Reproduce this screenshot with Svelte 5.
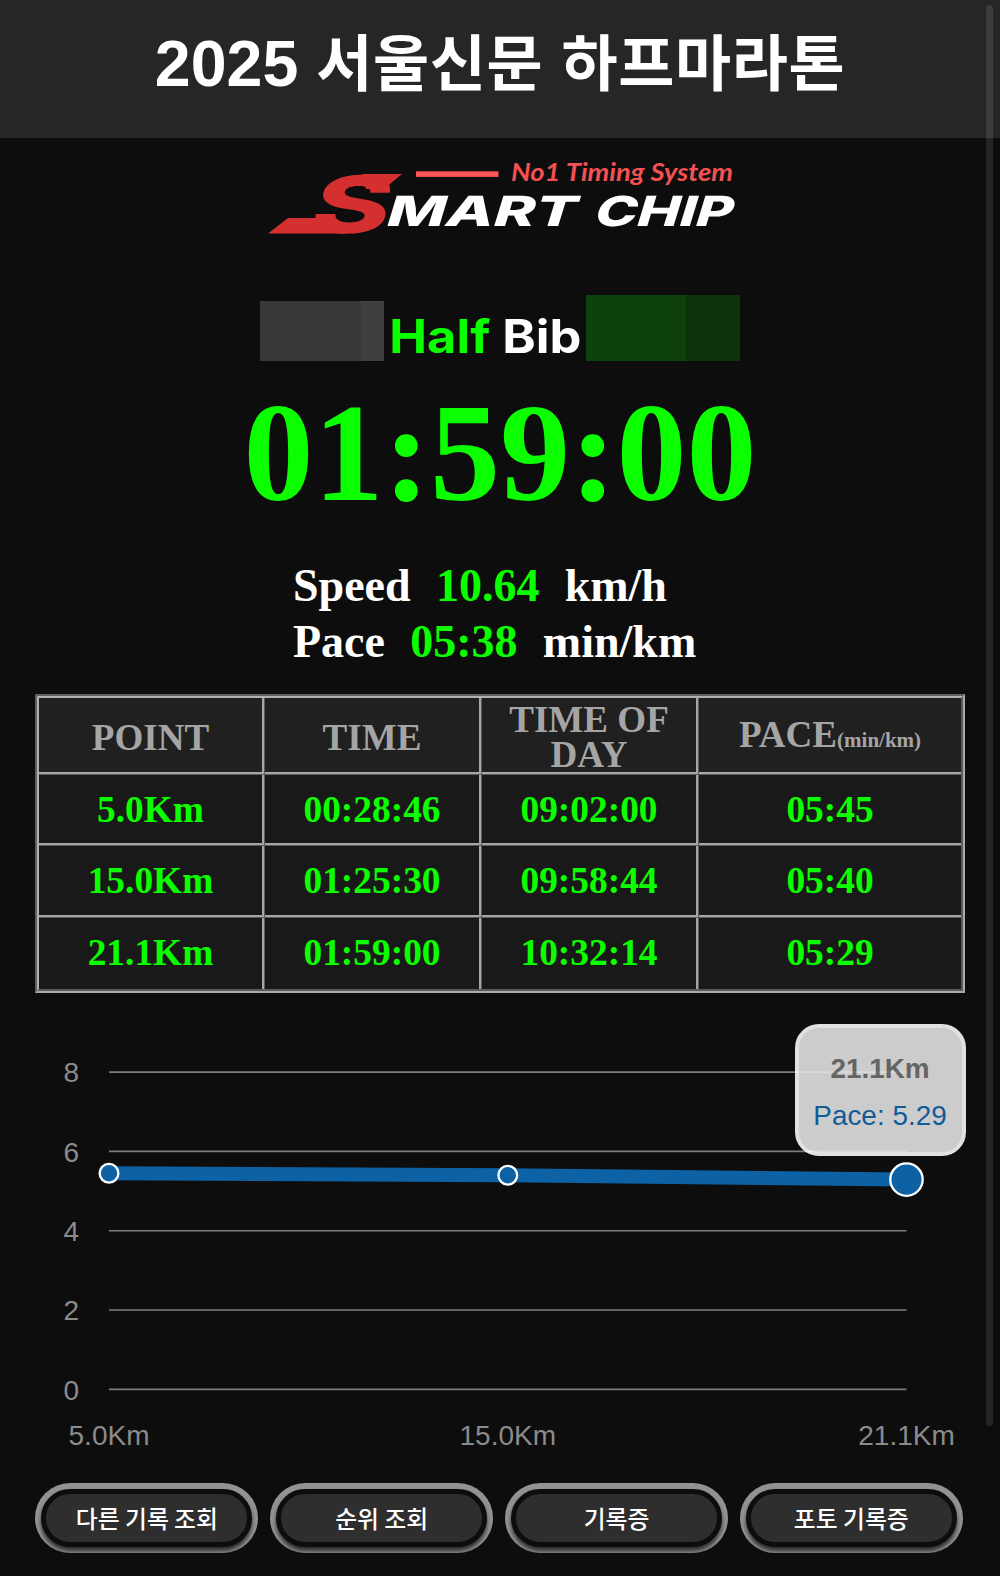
<script>
  const rows = [
    { point: '5.0Km', time: '00:28:46', day: '09:02:00', pace: '05:45' },
    { point: '15.0Km', time: '01:25:30', day: '09:58:44', pace: '05:40' },
    { point: '21.1Km', time: '01:59:00', day: '10:32:14', pace: '05:29' }
  ];

  const points = [
    { label: '5.0Km', value: 5.45, x: 109 },
    { label: '15.0Km', value: 5.4, x: 507.8 },
    { label: '21.1Km', value: 5.29, x: 906.5 }
  ];

  const ticks = [8, 6, 4, 2, 0];
  const actions = ['다른 기록 조회', '순위 조회', '기록증', '포토 기록증'];

  const y = (v) => 396.3 - v * 39.64;
  const line = points.map((p) => `${p.x},${y(p.value)}`).join(' ');
</script>

<main>
  <header>
    <h1>2025 <span>서울신문 하프마라톤</span></h1>
  </header>

  <svg class="logo" viewBox="0 138 1000 157" role="img" aria-label="Smart Chip">
    <path class="swoosh" d="M268 233.5 288 218H336L345 233.5Z" />
    <path class="swoosh" d="M362 174H402L384 189H366Z" />
    <text class="mark" transform="translate(307 232.7) skewX(-14) scale(1.5 1)">S</text>
    <rect class="rule" x="416" y="171.3" width="82.5" height="5.6" />
    <text class="tagline" x="511" y="180.6" textLength="222" lengthAdjust="spacingAndGlyphs">No1 Timing System</text>
    <text class="word" transform="translate(384 226.3) skewX(-17)" textLength="190" lengthAdjust="spacingAndGlyphs">MART</text>
    <text class="word" transform="translate(592 226.3) skewX(-17)" textLength="138" lengthAdjust="spacingAndGlyphs">CHIP</text>
  </svg>

  <section class="runner">
    <i class="mask name"></i>
    <p><b>Half</b> Bib</p>
    <i class="mask bib"></i>
  </section>

  <div class="finish">01:59:00</div>

  <section class="stats">
    <div><span>Speed</span><b>10.64</b><span>km/h</span></div>
    <div><span>Pace</span><b>05:38</b><span>min/km</span></div>
  </section>

  <section class="table">
    <div class="grid">
      <div class="cell head">POINT</div>
      <div class="cell head">TIME</div>
      <div class="cell head">TIME OF<br />DAY</div>
      <div class="cell head last"><span>PACE<small>(min/km)</small></span></div>
      {#each rows as r, i}
        {@const bottom = i === rows.length - 1}
        <div class="cell" class:bottom>{r.point}</div>
        <div class="cell" class:bottom>{r.time}</div>
        <div class="cell" class:bottom>{r.day}</div>
        <div class="cell last" class:bottom>{r.pace}</div>
      {/each}
    </div>
  </section>

  <section class="chart">
    <svg viewBox="0 0 1000 490">
      {#each ticks as t}
        <line class="gridline" x1="109" x2="906.5" y1={y(t)} y2={y(t)} />
        <text class="axis" x="63.5" y={y(t) + 10.3}>{t}</text>
      {/each}
      <polyline class="series" points={line} />
      {#each points as p, i}
        <circle class="dot" cx={p.x} cy={y(p.value)} r={i === 2 ? 16.2 : 9.4} />
        <text class="axis mid" x={p.x} y="452">{p.label}</text>
      {/each}
    </svg>
    <div class="tooltip">
      <strong>21.1Km</strong>
      <span>Pace: 5.29</span>
    </div>
  </section>

  <nav>
    {#each actions as a}
      <button><span>{a}</span></button>
    {/each}
  </nav>

  <div class="scrollbar"></div>
</main>

<style>
  :global(body) {
    background: #0d0d0d;
  }
  main {
    position: relative;
    width: 1000px;
    height: 1576px;
    overflow: hidden;
    background: #0d0d0d;
    color: #fff;
    display: flex;
    flex-direction: column;
    font-family: 'Liberation Serif', serif;
    font-weight: bold;
  }
  header {
    height: 138px;
    flex: none;
    background: #262626;
    display: flex;
    justify-content: center;
  }
  h1 {
    margin: 0;
    font: bold 64.5px/129px 'Liberation Sans', sans-serif;
    white-space: nowrap;
  }
  h1 span {
    font: bold 61px/1 'Noto Sans CJK KR', sans-serif;
    letter-spacing: 0.6px;
    word-spacing: 4px;
  }
  .logo {
    display: block;
    flex: none;
    width: 1000px;
    height: 157px;
  }
  .swoosh,
  .mark {
    fill: #d3302f;
  }
  .mark {
    font: 800 79px Inter, sans-serif;
  }
  .rule {
    fill: #fb5556;
  }
  .tagline {
    font: italic bold 24px Lato, sans-serif;
    fill: #f45152;
  }
  .word {
    font: 800 41.5px Inter, sans-serif;
    fill: #fff;
  }
  .runner {
    height: 66px;
    flex: none;
    width: 480px;
    margin: 0 auto;
    display: flex;
    align-items: flex-end;
    justify-content: space-between;
  }
  .runner p {
    margin: 0;
    font: bold 46px/50px Inter, sans-serif;
    white-space: nowrap;
    transform: scaleX(1.1);
  }
  b {
    font-weight: bold;
    color: #0bff00;
  }
  .name {
    width: 124px;
    height: 60px;
    background: linear-gradient(90deg, #383838 101px, #3f3f3f 101px);
  }
  .bib {
    width: 153.5px;
    height: 66px;
    background: linear-gradient(90deg, #0d430a 100.5px, #0d330a 100.5px);
  }
  .finish {
    font-size: 140px;
    line-height: 184px;
    height: 184px;
    flex: none;
    text-align: center;
    color: #0bff00;
  }
  .stats {
    margin: 13px 0 24px 293px;
    font-size: 46px;
    line-height: 56px;
  }
  .stats div {
    display: flex;
    gap: 25.3px;
  }
  .table {
    margin-left: 35px;
    width: 930px;
    box-sizing: border-box;
    border: 2px solid;
    border-color: #606060 #a9a9a9 #a9a9a9 #606060;
  }
  .grid {
    display: grid;
    grid-template-columns: 226px 217px 217px 262px;
    grid-template-rows: 77px 71px 72px 71px;
    border: 2px solid;
    border-color: #b0b0b0 #5a5a5a #5a5a5a #b0b0b0;
  }
  .cell {
    display: flex;
    align-items: center;
    justify-content: center;
    text-align: center;
    background: #191919;
    border: 0 solid #5a5a5a;
    border-width: 0 1px 1px 0;
    box-shadow: inset -2px -2px #a6a6a6;
    padding: 0 2px 2px 0;
    font-size: 37.4px;
    line-height: 35px;
    color: #0bff00;
  }
  .head {
    background: #202020;
    color: #a5a5a5;
    font-size: 37.1px;
    padding-top: 2px;
    padding-bottom: 0;
  }
  .last {
    border-right: 0;
    box-shadow: inset 0 -2px #a6a6a6;
    padding-right: 0;
  }
  .bottom {
    border-bottom: 0;
    box-shadow: inset -2px 0 #a6a6a6;
  }
  .last.bottom {
    box-shadow: none;
  }
  .head.last {
    padding-top: 0;
    padding-bottom: 3px;
  }
  small {
    font-size: 21px;
    line-height: 1;
  }
  .chart {
    position: relative;
    height: 490px;
    flex: none;
    font-family: 'Liberation Sans', sans-serif;
  }
  .chart svg {
    display: block;
    width: 1000px;
    height: 490px;
  }
  .gridline {
    stroke: #7c7c7c;
    stroke-width: 1.7;
  }
  .axis {
    font-size: 28px;
    font-weight: normal;
    fill: #8b8b8b;
  }
  .mid {
    text-anchor: middle;
  }
  .series {
    fill: none;
    stroke: #0d62a6;
    stroke-width: 14;
  }
  .dot {
    fill: #0d62a6;
    stroke: #fff;
    stroke-width: 2.3;
  }
  .tooltip {
    position: absolute;
    left: 794.5px;
    top: 30.5px;
    width: 171px;
    height: 132.5px;
    box-sizing: border-box;
    border: 4.5px solid #fff;
    border-radius: 24px;
    background: #e7e7e7;
    opacity: 0.88;
    padding-top: 17.5px;
    text-align: center;
    font-size: 27.9px;
    line-height: 47px;
    white-space: nowrap;
    display: flex;
    flex-direction: column;
  }
  .tooltip strong {
    color: #707070;
  }
  .tooltip span {
    font-weight: normal;
    color: #1168ab;
  }
  nav {
    display: grid;
    grid-template-columns: repeat(4, 223px);
    gap: 11.8px;
    margin-left: 35.4px;
  }
  button {
    height: 70px;
    border: 0;
    border-radius: 35px;
    padding: 5.5px 6px 6.5px;
    background: #929292;
    overflow: hidden;
    display: flex;
  }
  button span {
    flex: 1;
    height: 58px;
    box-sizing: border-box;
    border: 5px solid #0d0d0d;
    border-radius: 29px;
    background: #2e2e2e;
    box-shadow: 0 4px 4px rgba(0, 0, 0, 0.7);
    color: #fff;
    font: 500 23.8px/47px 'Noto Sans CJK KR', sans-serif;
    text-align: center;
    white-space: nowrap;
  }
  .scrollbar {
    position: absolute;
    top: 5px;
    right: 7px;
    width: 7px;
    height: 1421px;
    border-radius: 4px;
    background: rgba(255, 255, 255, 0.1);
  }
</style>
